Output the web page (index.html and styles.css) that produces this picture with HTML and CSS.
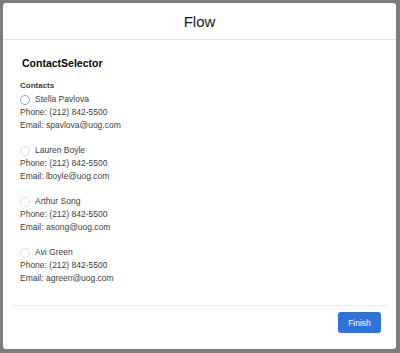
FILE: index.html
```html
<!DOCTYPE html>
<html lang="en">

<head>
  <meta charset="UTF-8" />
  <title>Flow</title>
  <link rel="stylesheet" href="styles.css">
</head>

<body>
  <div class="modal">
    <div class="modal-header">
      <h2>Flow</h2>
    </div>

    <div class="modal-body">
      <h3 class="screen-title">ContactSelector</h3>
      <div class="field-label">Contacts</div>

      <div class="contact">
        <label class="radio">
          <span class="radio-dot selected"></span>
          <span>Stella Pavlova</span>
        </label>
        <div class="line">Phone: (212) 842-5500</div>
        <div class="line">Email: spavlova@uog.com</div>
      </div>

      <div class="contact">
        <label class="radio">
          <span class="radio-dot"></span>
          <span>Lauren Boyle</span>
        </label>
        <div class="line">Phone: (212) 842-5500</div>
        <div class="line">Email: lboyle@uog.com</div>
      </div>

      <div class="contact">
        <label class="radio">
          <span class="radio-dot"></span>
          <span>Arthur Song</span>
        </label>
        <div class="line">Phone: (212) 842-5500</div>
        <div class="line">Email: asong@uog.com</div>
      </div>

      <div class="contact">
        <label class="radio">
          <span class="radio-dot"></span>
          <span>Avi Green</span>
        </label>
        <div class="line">Phone: (212) 842-5500</div>
        <div class="line">Email: agreen@uog.com</div>
      </div>
    </div>

    <div class="modal-footer">
      <button class="finish-btn">Finish</button>
    </div>
  </div>
</body>

</html>
```

FILE: styles.css
```css
* {
  box-sizing: border-box;
}

body {
  margin: 0;
  height: 353px;
  background: #7d7d7d;
  font-family: "Liberation Sans", Arial, sans-serif;
  overflow: hidden;
}

.modal {
  margin: 3px 4px 0 3px;
  height: 346px;
  background: #fff;
  border-radius: 3px;
  display: flex;
  flex-direction: column;
}

.modal-header {
  height: 37px;
  border-bottom: 1px solid #e3e3e3;
  display: flex;
  align-items: center;
  justify-content: center;
}

.modal-header h2 {
  margin: 0;
  font-size: 15px;
  font-weight: 400;
  color: #181818;
}

.modal-body {
  flex: 1;
  padding: 17px 17px 0;
  color: #3e3e3c;
}

.screen-title {
  margin: 0 0 12px 2px;
  font-size: 10.5px;
  font-weight: 700;
  color: #080707;
}

.field-label {
  font-size: 8px;
  font-weight: 700;
  color: #3e3e3c;
  margin-bottom: 3px;
}

.contact {
  font-size: 8.5px;
  line-height: 13px;
  margin-bottom: 12px;
}

.radio {
  display: flex;
  align-items: center;
  gap: 5px;
}

.radio-dot {
  width: 10px;
  height: 10px;
  border-radius: 50%;
  border: 1px solid #e1e1e1;
}

.radio-dot.selected {
  border-color: #7fa7ea;
}

.modal-footer {
  margin: 0 8px 0 10px;
  border-top: 1px solid #ececec;
  height: 44px;
  display: flex;
  align-items: flex-start;
  justify-content: flex-end;
  padding: 6px 7px 0 0;
}

.finish-btn {
  width: 43px;
  height: 21px;
  border: none;
  border-radius: 3px;
  background: #2f73d6;
  color: #fff;
  font-family: inherit;
  font-size: 8.5px;
  padding: 0;
}
```
